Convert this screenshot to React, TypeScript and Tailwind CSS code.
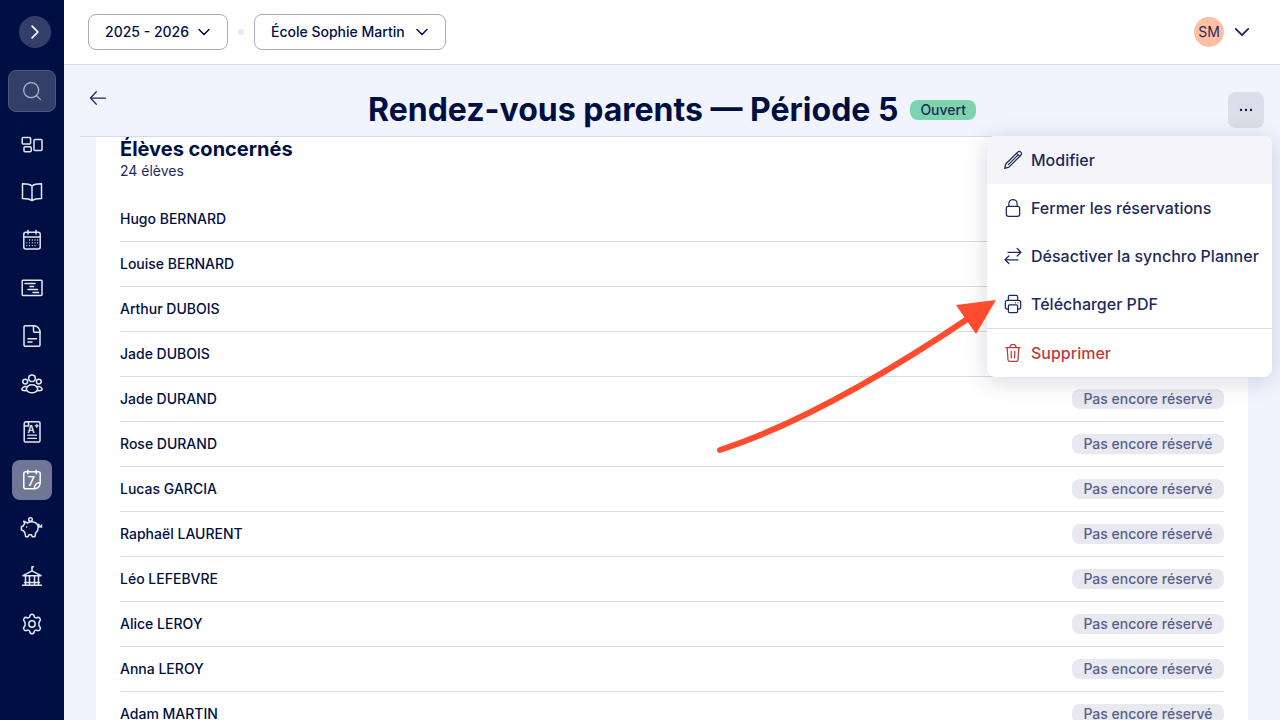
import type { ReactNode } from 'react';

function Icon({ children, className = 'size-6' }: { children: ReactNode; className?: string }) {
  return (
    <svg
      viewBox="0 0 24 24"
      fill="none"
      stroke="currentColor"
      strokeWidth="1.5"
      strokeLinecap="round"
      strokeLinejoin="round"
      aria-hidden="true"
      className={className}
    >
      {children}
    </svg>
  );
}

function ChevronDown({ className }: { className?: string }) {
  return (
    <svg viewBox="0 0 16 16" fill="none" stroke="currentColor" strokeWidth="1.5" strokeLinecap="round" strokeLinejoin="round" aria-hidden="true" className={className}>
      <path d="M3 5.500 8 10.500l5-5" />
    </svg>
  );
}

const navItems = [
  {
    label: 'Tableau de bord',
    icon: (
      <Icon>
        <rect x="2.2" y="5.6" width="8.4" height="6.4" rx="1" />
        <rect x="4" y="14.8" width="7.2" height="5" rx="1" />
        <rect x="14" y="7.4" width="8" height="11.2" rx="1" />
      </Icon>
    ),
  },
  {
    label: 'Cahier',
    icon: (
      <Icon>
        <path d="M12 6c-2-1.800-5-2.200-9.500-2.200v14.600c4.500 0 7.500.6 9.500 2.200 2-1.600 5-2.200 9.500-2.200V3.800C17 3.800 14 4.200 12 6zM12 6v14.500" />
      </Icon>
    ),
  },
  {
    label: 'Calendrier',
    icon: (
      <Icon>
        <rect x="3.8" y="4.3" width="16.4" height="16.6" rx="2" />
        <path d="M3.800 9h16.400M8 2.500v3.500M16 2.500v3.500" />
        <path d="M9.500 12h.01M12.300 12h.01M15 12h.01M17.500 12h.01M6.800 14.800h.01M9.500 14.800h.01M12.300 14.800h.01M15 14.800h.01M17.500 14.800h.01M6.800 17.600h.01M9.500 17.600h.01M12.300 17.600h.01M15 17.600h.01" strokeWidth="1.3" />
      </Icon>
    ),
  },
  {
    label: 'Emploi du temps',
    icon: (
      <Icon>
        <rect x="2.2" y="4.2" width="19.8" height="15.2" rx="0.8" />
        <path d="M5 7.500h10M10 10.500h3.500M8 13.500h9.500M13 16.500h5.500" />
      </Icon>
    ),
  },
  {
    label: 'Documents',
    icon: (
      <Icon>
        <path d="M14 1.800H5.200A1.200 1.200 0 0 0 4 3v18a1.200 1.200 0 0 0 1.200 1.200h13.600A1.200 1.200 0 0 0 20 21V8.200c0-3.600-2.600-6.400-6-6.400z" />
        <path d="M13.500 1.800v5.400a1 1 0 0 0 1 1H20M8 14.700h8.500M8 18h4" />
      </Icon>
    ),
  },
  {
    label: 'Élèves',
    icon: (
      <Icon>
        <circle cx="12" cy="6.2" r="3.3" />
        <circle cx="5.2" cy="9.6" r="2.4" />
        <circle cx="18.8" cy="9.6" r="2.4" />
        <path d="M6.200 17.200c.6-2.700 2.900-4.400 5.800-4.400s5.200 1.700 5.800 4.400c-.9 2.200-3 3.600-5.800 3.600s-4.900-1.400-5.800-3.600z" />
        <path d="M6.600 14.700c-2.600-.6-4.400.6-4.800 2.900.9.900 2.300 1.400 4.400 1.200M17.400 14.700c2.600-.6 4.400.6 4.800 2.900-.9.900-2.300 1.400-4.400 1.200" />
      </Icon>
    ),
  },
  {
    label: 'Évaluations',
    icon: (
      <Icon>
        <path d="M4.200 5.500v15.300a1.200 1.200 0 0 0 1.200 1.200h13.400a1.200 1.200 0 0 0 1.200-1.200V3a1.200 1.200 0 0 0-1.200-1.200H6.400M4.200 5.800V4a2.200 2.200 0 1 1 4.400 0v2H4.200" />
        <path d="M7.800 15.200h8.600M7.800 18.400h8.600M16.800 4.300v3M15.300 5.800h3" strokeWidth="1.3" />
        <text x="7.400" y="12.600" fontSize="10" fontWeight="600" fill="currentColor" stroke="none" className="font-[Inter,sans-serif]">A</text>
      </Icon>
    ),
  },
  {
    label: 'Rendez-vous',
    active: true,
    icon: (
      <Icon>
        <path d="M14.500 20.800H5.600A1.800 1.800 0 0 1 3.800 19V5.600a1.800 1.800 0 0 1 1.800-1.800h12.800a1.800 1.800 0 0 1 1.800 1.800v9.200c0 3.300-2.400 6-5.700 6zM20 14.800c-3.300-.6-5.600 1.800-5.500 6M7.800 2.300v3.500M16.200 2.300v3.500" />
        <text x="7.600" y="17.500" fontSize="13" fontWeight="500" fill="currentColor" stroke="none" className="font-[Inter,sans-serif]">7</text>
      </Icon>
    ),
  },
  {
    label: 'Facturation',
    icon: (
      <Icon>
        <circle cx="10.5" cy="3.5" r="1.8" />
        <path d="M3.800 5.200 7.500 7c2.600-1.600 6.200-1.600 8.600.2 1.200.9 2 2.100 2.300 3.600-.1 2.800-1 4.700-2.700 6.200l-.8 3.700h-2.600l-.8-2H8.900l-.9 2H5.700l-.8-3.900-1.500-2-2-.7v-3.300l1.800-.8c.3-.9.700-1.600 1.400-2.300z" />
        <path d="M18.300 11.200c1.400-.2 2.700-.8 3.400-2.200M18.800 8.300c.2 1.900 1.400 2.900 3 2.600M6.600 11h.01" />
      </Icon>
    ),
  },
  {
    label: 'Établissement',
    icon: (
      <Icon>
        <path d="M2.500 21.200h19M3 11.700 12 6.800l9 4.900zM12 6.500V2.800h1.500M4.500 18.500h15M5.500 12v9M9.500 12v9M14.500 12v9M18.500 12v9" />
      </Icon>
    ),
  },
  {
    label: 'Paramètres',
    icon: (
      <Icon>
        <circle cx="12" cy="12" r="3.2" />
        <path d="M9.700 4.500c.6-3 4-3 4.600 0 .2 1.100 1.400 1.700 2.400 1.200 2.800-1.200 5 1.700 2.800 3.900-.9.900-.9 3.900 0 4.800 2.200 2.200 0 5.100-2.800 3.900-1-.5-2.200.1-2.400 1.200-.6 3-4 3-4.600 0-.2-1.100-1.400-1.700-2.400-1.200-2.800 1.200-5-1.700-2.800-3.900.9-.9.900-3.900 0-4.800-2.200-2.200 0-5.100 2.800-3.900 1 .5 2.200-.1 2.400-1.200z" />
      </Icon>
    ),
  },
];

const menuItems = [
  {
    label: 'Modifier',
    icon: (
      <Icon className="size-5">
        <path d="m2 22 1.300-5.200L17.600 2.500a2.600 2.600 0 0 1 3.800 0 2.600 2.600 0 0 1 0 3.800L7.100 20.600 2 22zM16.300 3.800l3.800 3.800M6.500 17.500 17.300 6.800" />
      </Icon>
    ),
  },
  {
    label: 'Fermer les réservations',
    icon: (
      <Icon className="size-5">
        <rect x="4" y="10" width="16" height="12" rx="2.5" />
        <path d="M7 10V6.800a5 5 0 0 1 10 0V10" />
      </Icon>
    ),
  },
  {
    label: 'Désactiver la synchro Planner',
    icon: (
      <Icon className="size-5">
        <path d="M6 7.500h15.500M17 3l4.500 4.500L17 12M18 16.500H2.500M7 12l-4.500 4.500L7 21" />
      </Icon>
    ),
  },
  {
    label: 'Télécharger PDF',
    icon: (
      <Icon className="size-5">
        <path d="M6.500 7.500V3.200a1.500 1.500 0 0 1 1.500-1.500h8a1.500 1.500 0 0 1 1.500 1.500v4.300M6.500 18H5.300a2.500 2.500 0 0 1-2.500-2.500V10a2.500 2.500 0 0 1 2.500-2.500h13.400a2.500 2.500 0 0 1 2.500 2.500v5.500a2.500 2.500 0 0 1-2.500 2.500h-1.200" />
        <rect x="6.5" y="13" width="11" height="9.2" rx="1.2" />
        <path d="M15 10.500h.01M18 10.500h.01" />
      </Icon>
    ),
  },
];

const pending = 'Pas encore réservé';

const students: { name: string; status?: string }[] = [
  { name: 'Hugo BERNARD' },
  { name: 'Louise BERNARD' },
  { name: 'Arthur DUBOIS' },
  { name: 'Jade DUBOIS' },
  { name: 'Jade DURAND', status: pending },
  { name: 'Rose DURAND', status: pending },
  { name: 'Lucas GARCIA', status: pending },
  { name: 'Raphaël LAURENT', status: pending },
  { name: 'Léo LEFEBVRE', status: pending },
  { name: 'Alice LEROY', status: pending },
  { name: 'Anna LEROY', status: pending },
  { name: 'Adam MARTIN', status: pending },
];

function Sidebar() {
  return (
    <aside className="flex w-16 shrink-0 flex-col items-center bg-[#000f43] pt-4 text-[#e3e7f3]">
      <button type="button" aria-label="Ouvrir le menu" className="mr-[13px] flex size-8 items-center justify-center self-end rounded-full bg-[#333f69] text-white">
        <Icon className="size-5">
          <path d="m8.500 5 7 7-7 7" strokeWidth="2" />
        </Icon>
      </button>
      <button type="button" aria-label="Rechercher" className="mt-[22px] flex h-[42px] w-12 items-center justify-center rounded-lg border border-[#4d577c] bg-[#333f69] text-[#b3b9cb]">
        <Icon className="size-5">
          <circle cx="11" cy="11" r="9" />
          <path d="m17.500 17.500 4.500 4.500" />
        </Icon>
      </button>
      <nav className="mt-3 flex flex-col gap-2">
        {navItems.map((item) => (
          <a
            key={item.label}
            href="#"
            aria-label={item.label}
            className={`flex size-10 items-center justify-center rounded-lg ${item.active ? 'bg-[#6f7795] text-white' : ''}`}
          >
            {item.icon}
          </a>
        ))}
      </nav>
    </aside>
  );
}

function HeaderSelect({ label, value, className }: { label: string; value: string; className: string }) {
  return (
    <div className={`relative ${className}`}>
      <select
        aria-label={label}
        className="h-9 w-full appearance-none rounded-lg border border-[#a6adc2] bg-white pr-9 pl-4 text-sm font-medium text-[#000f43]"
      >
        <option>{value}</option>
      </select>
      <ChevronDown className="pointer-events-none absolute top-1/2 right-4 size-4 -translate-y-1/2 text-[#000f43]" />
    </div>
  );
}

function TopBar() {
  return (
    <header className="flex h-[65px] shrink-0 items-center justify-between border-b border-[#d7dbe9] bg-white px-6">
      <div className="flex items-center gap-2.5">
        <HeaderSelect label="Année scolaire" value="2025 - 2026" className="w-35" />
        <span className="size-1.5 rounded-full bg-[#e7e8f0]" />
        <HeaderSelect label="Établissement" value="École Sophie Martin" className="w-48" />
      </div>
      <button type="button" aria-label="Mon compte" className="mr-1 flex items-center gap-2 text-[#1d2a5c]">
        <span className="flex size-[30px] items-center justify-center rounded-full bg-[#ffbfa5] text-sm">SM</span>
        <ChevronDown className="size-5" />
      </button>
    </header>
  );
}

function ActionsMenu() {
  return (
    <div className="absolute top-full -right-2 z-10 mt-2 w-[285px] rounded-lg bg-white whitespace-nowrap text-[#1d2a5c] shadow-[0_4px_24px_rgba(0,15,67,0.16)]">
      {menuItems.map((item) => (
        <button key={item.label} type="button" className="flex h-12 w-full items-center gap-2 px-4 font-medium first:rounded-t-lg first:bg-[#f5f5f9]">
          <span className="shrink-0">{item.icon}</span>
          {item.label}
        </button>
      ))}
      <button type="button" className="flex h-[49px] w-full items-center gap-2 border-t border-[#d7dbe9] px-4 font-medium text-[#c03a3a]">
        <Icon className="size-5">
          <path d="M3.500 5.500h17M5 5.500l1 14.700A2 2 0 0 0 8 22h8a2 2 0 0 0 2-1.800l1-14.700M8 5.500 9 3a2 2 0 0 1 1.700-1h2.600A2 2 0 0 1 15 3l1 2.500M9.800 9.800l.2 8M14.200 9.800l-.2 8" />
        </Icon>
        Supprimer
      </button>
      <svg viewBox="0 0 288 160" aria-hidden="true" className="pointer-events-none absolute top-40 right-[272px] h-40 w-72">
        <path d="M8 154C82 130 168 82 260 20" fill="none" stroke="#ff4c2f" strokeWidth="6" strokeLinecap="round" />
        <path d="M284 4 244 9l20 29z" fill="#ff4c2f" />
      </svg>
    </div>
  );
}

function PageHeader() {
  return (
    <div className="mx-4 grid grid-cols-[1fr_auto_1fr] border-b border-[#d7dbe9] pt-[15px] pb-2">
      <a href="#" aria-label="Retour" className="flex size-9 items-center justify-center text-[#1d2a5c]">
        <Icon className="size-5">
          <path d="M21 12H3M10 4.500 3 12l7 7.500" />
        </Icon>
      </a>
      <div className="mt-3 flex items-center gap-3">
        <h1 className="text-[32px] leading-9 font-bold whitespace-nowrap text-[#000f43]">Rendez-vous parents — Période 5</h1>
        <span className="rounded-lg bg-[#7dd3ae] px-2.5 text-sm font-medium text-[#1d2a5c]">Ouvert</span>
      </div>
      <div className="relative mt-3 justify-self-end">
        <button type="button" aria-label="Actions" className="flex size-9 items-center justify-center rounded-lg bg-[#dadee8] text-[#000f43]">
          <Icon className="size-5">
            <path d="M6 12h.01M12 12h.01M18 12h.01" strokeWidth="2.8" />
          </Icon>
        </button>
        <ActionsMenu />
      </div>
    </div>
  );
}

export default function App() {
  return (
    <div className="flex h-screen overflow-hidden bg-[#f1f4fd] font-[Inter,sans-serif]">
      <Sidebar />
      <div className="flex min-w-0 flex-1 flex-col">
        <TopBar />
        <PageHeader />
        <main className="min-h-0 flex-1 overflow-hidden px-8">
          <section className="bg-white px-6 pb-6">
            <h2 className="text-xl leading-6 font-bold text-[#000f43]">Élèves concernés</h2>
            <p className="text-sm text-[#1d2a5c]">24 élèves</p>
            <ul className="mt-4">
              {students.map(({ name, status }) => (
                <li key={name} className="flex h-[45px] items-center justify-between border-b border-[#d9dce5] text-sm font-medium">
                  <span className="text-[#000f43]">{name}</span>
                  {status && <span className="w-38 rounded-lg bg-[#e7e8f0] text-center text-[#56608a]">{status}</span>}
                </li>
              ))}
            </ul>
          </section>
        </main>
      </div>
    </div>
  );
}
